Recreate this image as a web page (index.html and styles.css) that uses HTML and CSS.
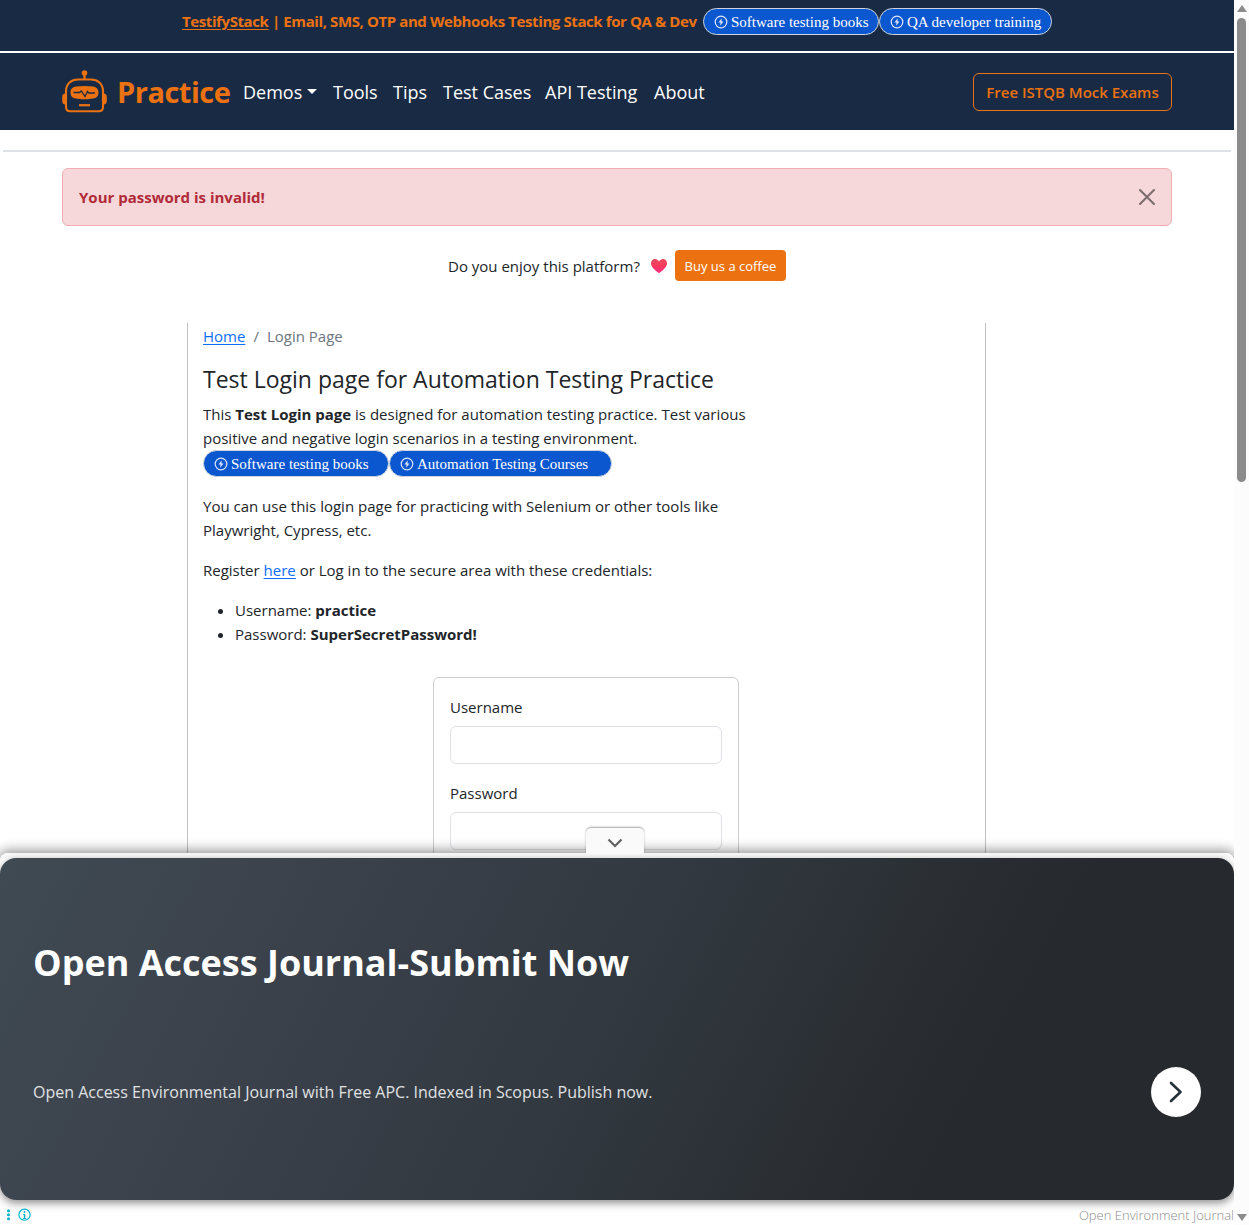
FILE: index.html
```html
<!DOCTYPE html>
<html lang="en">
<head>
<meta charset="utf-8">
<title>Test Login Page for Automation Testing Practice</title>
<link rel="stylesheet" href="styles.css">
</head>
<body>
<svg class="defs" width="0" height="0" aria-hidden="true">
  <symbol id="bolt" viewBox="0 0 14 14"><circle cx="7" cy="7" r="5.8" fill="none" stroke="currentColor" stroke-width="1.2"/><path d="M7.7 3.2 4.5 7.6h2L6.2 10.8 9.5 6.4h-2z" fill="currentColor"/></symbol>
</svg>
<div class="page">
  <div class="promo">
    <span class="promo-text"><a href="#">TestifyStack</a> | Email, SMS, OTP and Webhooks Testing Stack for QA &amp; Dev</span>
    <div class="pills"><a class="pill pill-a"><svg><use href="#bolt"/></svg><span>Software testing books</span></a><a class="pill pill-b"><svg><use href="#bolt"/></svg><span>QA developer training</span></a></div>
  </div>
  <nav class="navbar">
    <a class="brand">
      <svg width="46" height="44" viewBox="0 0 46 44" fill="none" stroke="#ec7211">
        <circle cx="22.5" cy="3" r="2.8" fill="#ec7211" stroke="none"/>
        <path d="M22.5 4v6" stroke-width="2.4"/>
        <path d="M4 21.5C4 13.500 9.500 9.500 16 9.500h13c6.500 0 12 4 12 12V37c0 2.800-1.600 4.200-4 4.200H8c-2.400 0-4-1.400-4-4.200z" stroke-width="2.100"/>
        <path d="M3.200 23.500C1.400 23.700.2 24.800.2 27v4c0 2.200 1.200 3.300 3 3.500zM41.800 23.500c1.800.2 3 1.300 3 3.500v4c0 2.200-1.200 3.300-3 3.500z" fill="#ec7211" stroke="none"/>
        <path d="M14 16.500c5-.7 12-.7 17 0 3.600.4 5.500 2.800 5.500 6.200 0 3.200-2 5.200-5.500 5.900-5 .9-12 .9-17 0-3.500-.7-5.500-2.700-5.500-5.900 0-3.400 1.900-5.800 5.500-6.200z" fill="#ec7211" stroke="none"/>
        <path d="M11.500 22.500h6l1.800-1.500 3.700 5.500 2.500-5 1.200 1.500H33" stroke="#192b44" stroke-width="1.300"/>
        <path d="M17 35.200h11" stroke-width="2.200"/>
      </svg>
      <span>Practice</span>
    </a>
    <div class="links">
      <a class="l-demos">Demos<i class="caret"></i></a><a class="l-tools">Tools</a><a class="l-tips">Tips</a><a class="l-cases">Test Cases</a><a class="l-api">API Testing</a><a class="l-about">About</a>
    </div>
    <a class="exams"><span>Free ISTQB Mock Exams</span></a>
  </nav>
  <hr class="rule">
  <div class="alert"><b>Your password is invalid!</b>
    <svg width="16" height="16" viewBox="0 0 16 16"><path d="M1 1l14 14M15 1L1 15" stroke="#7c6c6e" stroke-width="2" stroke-linecap="round"/></svg>
  </div>
  <div class="support">
    <span class="ask">Do you enjoy this platform?</span>
    <svg width="18" height="16" viewBox="0 0 18 16"><defs><linearGradient id="h" x1="0" y1="0" x2="0" y2="1"><stop offset="0" stop-color="#f0485a"/><stop offset=".5" stop-color="#f73a5f"/><stop offset="1" stop-color="#fb2a86"/></linearGradient></defs><path d="M9 15.200C5 12.200 1 9.300 1 5.300 1 2.700 2.700 1 5 1c1.700 0 3.200 1 4 2.400C9.800 2 11.300 1 13 1c2.300 0 4 1.700 4 4.300 0 4-4 6.900-8 9.900z" fill="url(#h)"/></svg>
    <a class="coffee"><span>Buy us a coffee</span></a>
  </div>
  <main class="content">
    <div class="crumbs"><a href="#">Home</a><i>/</i><span>Login Page</span></div>
    <h1>Test Login page for Automation Testing Practice</h1>
    <p class="intro"><span class="t1">This <b>Test Login page</b> is designed for automation testing practice. Test various</span><br><span class="t2">positive and negative login scenarios in a testing environment.</span></p>
    <div class="pills"><a class="pill pill-c"><svg><use href="#bolt"/></svg><span>Software testing books</span></a><a class="pill pill-d"><svg><use href="#bolt"/></svg><span>Automation Testing Courses</span></a></div>
    <p class="tools"><span class="t3">You can use this login page for practicing with Selenium or other tools like</span><br><span class="t4">Playwright, Cypress, etc.</span></p>
    <p><span class="t5">Register <a href="#">here</a> or Log in to the secure area with these credentials:</span></p>
    <ul>
      <li><span class="t6">Username: <b>practice</b></span></li>
      <li><span class="t7">Password: <b>SuperSecretPassword!</b></span></li>
    </ul>
    <form class="card">
      <label for="u">Username</label><input id="u" type="text">
      <label for="p">Password</label><input id="p" type="password">
    </form>
  </main>
  <aside class="ad">
    <div class="tab"><svg width="16" height="10" viewBox="0 0 16 10"><path d="M1.500 1.500 8 8l6.500-6.500" fill="none" stroke="#616161" stroke-width="2.200"/></svg></div>
    <div class="banner">
      <h2>Open Access Journal-Submit Now</h2>
      <div class="banner-row">
        <span>Open Access Environmental Journal with Free APC. Indexed in Scopus. Publish now.</span>
        <div class="go"><svg width="14" height="22" viewBox="0 0 14 22"><path d="M2 2l9.500 9L2 20" fill="none" stroke="#263238" stroke-width="2.600" stroke-linecap="round" stroke-linejoin="round"/></svg></div>
      </div>
    </div>
    <div class="ad-foot">
      <svg width="32" height="14" viewBox="0 0 32 14"><g fill="#00aecd"><circle cx="8.500" cy="2.700" r="1.500"/><circle cx="8.500" cy="6.700" r="1.500"/><circle cx="8.500" cy="10.700" r="1.500"/><circle cx="24.500" cy="4" r="1"/><path d="M23 6h2.300v4h1v1H23v-1h.9V7H23z"/></g><circle cx="24.500" cy="6.700" r="5.600" fill="none" stroke="#00aecd" stroke-width="1.100"/></svg>
      <span>Open Environment Journal</span>
    </div>
  </aside>
</div>
<div class="scrollbar"><i class="up"></i><i class="thumb"></i><i class="down"></i></div>
</body>
</html>
```
FILE: styles.css
```css
* { box-sizing: border-box; }
body {
  margin: 0;
  height: 1225px;
  overflow: hidden;
  display: flex;
  background: #fff;
  color: #212529;
  font: 15px/24px "Open Sans", "Noto Sans", sans-serif;
}
a { color: #0d6efd; text-underline-offset: 2px; }
p { margin: 0 0 16px; }
.defs { position: absolute; }
.page { position: relative; width: 1234px; height: 1225px; overflow: hidden; }

.promo {
  height: 51px;
  padding-top: 8px;
  background: #192b44;
  display: flex;
  justify-content: center;
  gap: 4px;
}
.promo-text { color: #ec7211; font-weight: 700; line-height: 27px; white-space: nowrap; width: 517px; letter-spacing: -.4px; }
.promo-text a { color: inherit; }
.pills { display: flex; }
.pill {
  height: 27px;
  padding-left: 10px;
  display: flex;
  align-items: center;
  gap: 3px;
  border: 1px solid #ced4da;
  border-radius: 14px;
  background: #0b57d0;
  color: #fff;
  font: 15px/25px "Liberation Serif", serif;
  white-space: nowrap;
}
.pill svg { width: 14px; height: 14px; color: #dce8ff; flex: none; }
.pill span { position: relative; top: 1px; }
.pill-a { width: 176px; }
.pill-b { width: 173px; }
.pill-c { width: 186px; }
.pill-d { width: 223px; }

.navbar {
  height: 77px;
  margin-top: 2px;
  padding: 0 62px;
  background: #192b44;
  display: flex;
  align-items: center;
}
.brand { display: flex; gap: 9px; width: 173px; color: #ec7211; font-size: 29px; line-height: 44px; font-weight: 700; letter-spacing: -.5px; }
.links { display: flex; flex: 1; font-size: 18px; line-height: 30px; white-space: nowrap; }
.links a { color: #fff; padding: 0 8px; }
.l-demos { width: 90px; display: flex; align-items: center; justify-content: space-between; }
.l-tools { width: 60px; }
.l-tips { width: 50px; }
.l-cases { width: 102px; }
.l-api { width: 109px; }
.caret { border: 5px solid transparent; border-top-color: #fff; border-bottom: 0; }
.exams {
  width: 199px;
  height: 38px;
  border: 1px solid #ec7211;
  border-radius: 6px;
  color: #ec7211;
  font-weight: 600;
  line-height: 36px;
  text-align: center;
  white-space: nowrap;
}
.rule { height: 2px; margin: 20px 3px 16px; border: 0; background: #dee2e6; }
.alert {
  height: 58px;
  margin: 0 62px;
  padding: 0 16px;
  display: flex;
  align-items: center;
  justify-content: space-between;
  border: 1px solid #f1aeb5;
  border-radius: 6px;
  background: #f6d7da;
  color: #b02a37;
}
.support { margin-top: 24px; height: 31px; display: flex; justify-content: center; align-items: center; }
.ask { width: 202px; white-space: nowrap; }
.coffee {
  width: 111px;
  height: 31px;
  margin-left: 7px;
  border-radius: 4px;
  background: #ec7211;
  color: #fff;
  font-size: 13px;
  line-height: 32px;
  text-align: center;
}
.content {
  width: 799px;
  height: 620px;
  margin: 42px 0 0 187px;
  padding: 1px 0 0 15px;
  border: solid #bfc2c5;
  border-width: 0 1px;
  white-space: nowrap;
}
.crumbs { display: flex; gap: 8px; color: #6c757d; margin-bottom: 16px; }
.crumbs i { font-style: normal; }
h1 { margin: 0 0 8px; font-size: 23px; line-height: 30px; font-weight: 500; }
.intro { margin: 0; }
.tools { margin-top: 17px; }
ul { margin: 0 0 31px; padding-left: 32px; }
.card { width: 306px; height: 300px; margin-left: 230px; padding: 17px 16px; border: 1px solid #ccced0; border-radius: 6px; }
label { display: block; margin-bottom: 7px; }
input { display: block; width: 272px; height: 38px; margin-bottom: 17px; border: 1px solid #dee2e6; border-radius: 6px; background: #fff; }

/* Anchored advert, pinned over the bottom of the page */
.ad { position: absolute; left: 0; bottom: 0; width: 1234px; height: 372px; padding-top: 5px; background: linear-gradient(#fafafa 5px, #fff 5px); box-shadow: 0 -1px 12px 2px rgba(0,0,0,.4); border-radius: 8px 8px 0 0; }
.tab {
  position: absolute;
  left: 586px;
  top: -25px;
  width: 58px;
  height: 26px;
  display: flex;
  justify-content: center;
  align-items: center;
  padding-top: 4px;
  background: #fafafa;
  border-radius: 5px 5px 0 0;
  box-shadow: 0 -1px 2px rgba(0,0,0,.35);
  clip-path: inset(-4px -4px 0 -4px);
}
.banner { height: 342px; padding: 78px 33px 0; border-radius: 16px; color: #fff; background: linear-gradient(118deg, #3f4a53 0%, #3c424c 22%, #31383f 50%, #26292d 78%, #26292d 100%); box-shadow: 0 3px 8px rgba(0,0,0,.45); }
h2 { margin: 0; font-size: 36px; line-height: 54px; font-weight: 700; }
.banner-row { margin-top: 77px; display: flex; align-items: center; justify-content: space-between; font-size: 16px; color: #e0e2e4; }
.go { width: 50px; height: 50px; border-radius: 50%; background: #fff; display: flex; align-items: center; justify-content: center; }
.ad-foot { height: 25px; padding-top: 5px; display: flex; align-items: center; justify-content: space-between; font-size: 13px; font-weight: 300; color: #8c8c8c; }

.scrollbar { width: 15px; height: 1225px; background: #fcfcfc; display: flex; flex-direction: column; align-items: center; }
.up { margin-top: 5px; border: 5px solid transparent; border-bottom: 7px solid #8b8b8b; border-top: 0; }
.thumb { width: 9px; height: 464px; margin-top: 6px; border-radius: 5px; background: #8b8b8b; }
.down { margin: auto 0 4px; border: 5px solid transparent; border-top: 7px solid #8b8b8b; border-bottom: 0; }
```
